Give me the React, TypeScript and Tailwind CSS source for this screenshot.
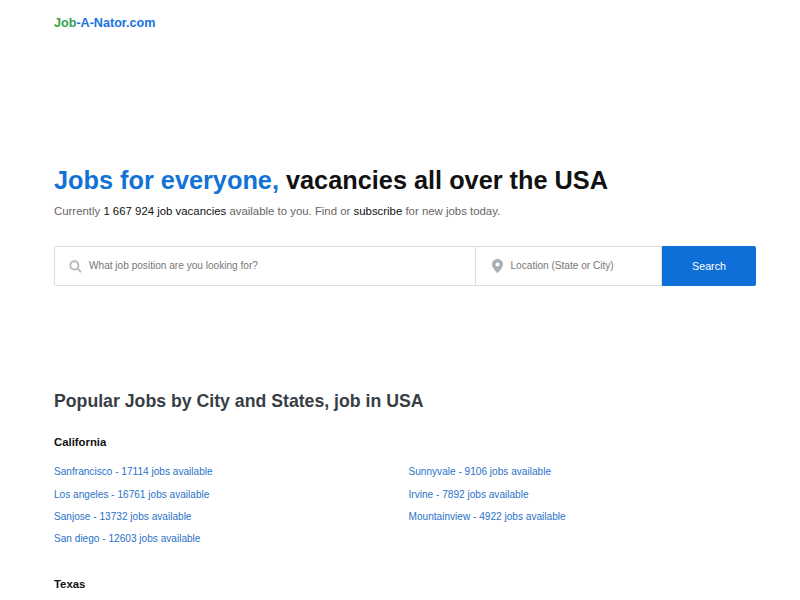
const popular = [
  "Sanfrancisco - 17114 jobs available",
  "Los angeles - 16761 jobs available",
  "Sanjose - 13732 jobs available",
  "San diego - 12603 jobs available",
];
const popular2 = [
  "Sunnyvale - 9106 jobs available",
  "Irvine - 7892 jobs available",
  "Mountainview - 4922 jobs available",
];

export default function App() {
  return (
    <div className="h-[600px] overflow-hidden bg-white font-['Liberation_Sans',Arial,sans-serif]">
      <div className="mx-[54px] w-[702px]">
        <header className="pt-[15px] text-[12.6px] font-bold leading-[17px]">
          <span className="text-[#34a04f]">Job</span>
          <span className="text-[#1a73e0]">-A-Nator.com</span>
        </header>

        <h1 className="mt-[131px] text-[25.3px] font-bold leading-[34px] text-[#111]">
          <span className="text-[#1273d6]">Jobs for everyone,</span> vacancies all over the USA
        </h1>
        <p className="mt-[6px] text-[11.4px] leading-[16px] text-[#666]">
          Currently <span className="text-[#111]">1 667 924 job vacancies</span> available to you. Find or{" "}
          <span className="text-[#111]">subscribe</span> for new jobs today.
        </p>

        <form className="mt-[27px] flex h-[40px] text-[10.1px]">
          <div className="flex w-[422px] items-center gap-[7px] rounded-l-[2px] border border-[#dcdee0] pl-[14px] text-[#777]">
            <svg width="13" height="13" viewBox="0 0 14 14" fill="none" stroke="#b4babd" strokeWidth="2">
              <circle cx="5.8" cy="5.8" r="4.4" />
              <path d="M9 9l4 4" />
            </svg>
            What job position are you looking for?
          </div>
          <div className="flex w-[186px] items-center gap-[7.5px] border-y border-r border-[#dcdee0] pl-[16px] text-[#777]">
            <svg width="11" height="14" viewBox="0 0 11 14">
              <path fillRule="evenodd" fill="#a9afb5" d="M5.5 0C2.5 0 0 2.4 0 5.4 0 9 5.5 14 5.5 14S11 9 11 5.4C11 2.4 8.5 0 5.5 0zm0 7.4a2 2 0 1 1 0-4 2 2 0 0 1 0 4z" />
            </svg>
            Location (State or City)
          </div>
          <button type="button" className="w-[94px] rounded-r-[2px] bg-[#0f6fd8] text-[10.7px] text-white">Search</button>
        </form>

        <h2 className="mt-[103px] text-[17.7px] font-bold leading-[24px] text-[#383e45]">Popular Jobs by City and States, job in USA</h2>
        <h3 className="mt-[21px] text-[11.34px] font-bold leading-[16px] text-[#111]">California</h3>
        <div className="mt-[14.3px] grid grid-cols-2 text-[10.1px] text-[#2a72c8]">
          <ul>{popular.map((t) => <li key={t} className="h-[22.3px] leading-[15px]">{t}</li>)}</ul>
          <ul className="pl-[3.5px]">{popular2.map((t) => <li key={t} className="h-[22.3px] leading-[15px]">{t}</li>)}</ul>
        </div>
        <h3 className="mt-[22.7px] text-[11.34px] font-bold leading-[16px] text-[#111]">Texas</h3>
      </div>
    </div>
  );
}
